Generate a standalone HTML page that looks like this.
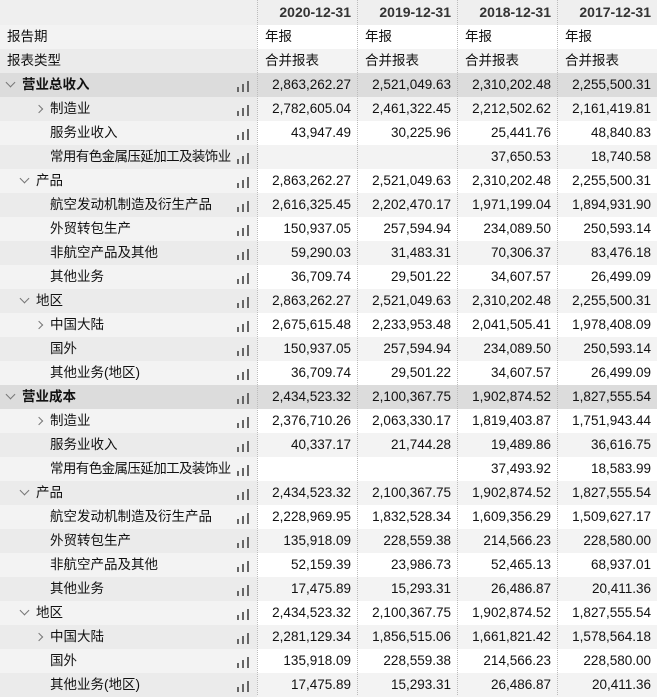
<!DOCTYPE html><html><head><meta charset="utf-8"><style>
*{margin:0;padding:0;box-sizing:border-box}
body{width:657px;height:695px;overflow:hidden;background:#fff;font-family:"Liberation Sans","Noto Sans CJK SC",sans-serif;font-size:13.5px;color:#111}
.r{position:absolute;left:0;width:657px;height:24px;line-height:24px}
.l{position:absolute;left:0;top:0;width:257px;height:24px;white-space:nowrap}
.c{position:absolute;top:0;width:100px;height:24px;text-align:right;padding-right:6px}
.t{position:absolute;top:0;width:100px;height:24px;text-align:left;padding-left:8px}
.ic{position:absolute;left:237px;top:0;width:14px;height:24px}
.ic i{position:absolute;bottom:5px;width:2.4px;background:#666}
.dn{position:absolute;top:6px;width:7px;height:7px;border-right:1px solid #777;border-bottom:1px solid #777;transform:rotate(45deg)}
.rt{position:absolute;top:9px;width:6px;height:6px;border-right:1px solid #777;border-bottom:1px solid #777;transform:rotate(-45deg)}
.v{position:absolute;left:257px;top:0;width:0;height:695px;border-left:1px dotted #bbb}
</style></head><body>
<div id="t"></div>
<script>
var H=[["2020-12-31","2019-12-31","2018-12-31","2017-12-31"]];
var rows=[
["报告期",0,"",null,["年报","年报","年报","年报"],1],
["报表类型",0,"",null,["合并报表","合并报表","合并报表","合并报表"],1],
["营业总收入",0,"v",1,["2,863,262.27","2,521,049.63","2,310,202.48","2,255,500.31"]],
["制造业",2,">",0,["2,782,605.04","2,461,322.45","2,212,502.62","2,161,419.81"]],
["服务业收入",2,"",0,["43,947.49","30,225.96","25,441.76","48,840.83"]],
["常用有色金属压延加工及装饰业",2,"",0,["","","37,650.53","18,740.58"]],
["产品",1,"v",0,["2,863,262.27","2,521,049.63","2,310,202.48","2,255,500.31"]],
["航空发动机制造及衍生产品",2,"",0,["2,616,325.45","2,202,470.17","1,971,199.04","1,894,931.90"]],
["外贸转包生产",2,"",0,["150,937.05","257,594.94","234,089.50","250,593.14"]],
["非航空产品及其他",2,"",0,["59,290.03","31,483.31","70,306.37","83,476.18"]],
["其他业务",2,"",0,["36,709.74","29,501.22","34,607.57","26,499.09"]],
["地区",1,"v",0,["2,863,262.27","2,521,049.63","2,310,202.48","2,255,500.31"]],
["中国大陆",2,">",0,["2,675,615.48","2,233,953.48","2,041,505.41","1,978,408.09"]],
["国外",2,"",0,["150,937.05","257,594.94","234,089.50","250,593.14"]],
["其他业务(地区)",2,"",0,["36,709.74","29,501.22","34,607.57","26,499.09"]],
["营业成本",0,"v",1,["2,434,523.32","2,100,367.75","1,902,874.52","1,827,555.54"]],
["制造业",2,">",0,["2,376,710.26","2,063,330.17","1,819,403.87","1,751,943.44"]],
["服务业收入",2,"",0,["40,337.17","21,744.28","19,489.86","36,616.75"]],
["常用有色金属压延加工及装饰业",2,"",0,["","","37,493.92","18,583.99"]],
["产品",1,"v",0,["2,434,523.32","2,100,367.75","1,902,874.52","1,827,555.54"]],
["航空发动机制造及衍生产品",2,"",0,["2,228,969.95","1,832,528.34","1,609,356.29","1,509,627.17"]],
["外贸转包生产",2,"",0,["135,918.09","228,559.38","214,566.23","228,580.00"]],
["非航空产品及其他",2,"",0,["52,159.39","23,986.73","52,465.13","68,937.01"]],
["其他业务",2,"",0,["17,475.89","15,293.31","26,486.87","20,411.36"]],
["地区",1,"v",0,["2,434,523.32","2,100,367.75","1,902,874.52","1,827,555.54"]],
["中国大陆",2,">",0,["2,281,129.34","1,856,515.06","1,661,821.42","1,578,564.18"]],
["国外",2,"",0,["135,918.09","228,559.38","214,566.23","228,580.00"]],
["其他业务(地区)",2,"",0,["17,475.89","15,293.31","26,486.87","20,411.36"]]
];
var h='<div class="r" style="top:0;height:25px;background:#efefef">';
H[0].forEach(function(d,j){h+='<div class="c" style="left:'+(257+j*100)+'px;font-weight:bold;color:#333;padding-right:6px;font-size:14px">'+d+'</div>'});
h+='</div>';
rows.forEach(function(r,i){
 var top=25+i*24,b=r[3]===1,odd=i%2==1;
 var lb=b?'#dcdcdc':(odd?'#ebebeb':'#f3f3f3'),cb=b?'#dcdcdc':(odd?'#f3f3f3':'#fff');
 h+='<div class="r" style="top:'+top+'px;background:'+cb+'"><div class="l" style="background:'+lb+'">';
 var tx=r[5]?7:[22,36,50][r[1]];
 if(r[2]=='v')h+='<span class="dn" style="left:'+(tx-15)+'px"></span>';
 if(r[2]=='>')h+='<span class="rt" style="left:'+(tx-14)+'px"></span>';
 var ls=r[0].length>12?'letter-spacing:-0.6px;':'';
 h+='<span style="position:absolute;left:'+tx+'px;'+ls+(b?'font-weight:bold;':'')+'">'+r[0]+'</span>';
 if(!r[5])h+='<div class="ic"><i style="left:0;height:5px"></i><i style="left:5px;height:8px"></i><i style="left:10px;height:11px"></i></div>';
 h+='</div>';
 r[4].forEach(function(v,j){h+='<div class="'+(r[5]?'t':'c')+'" style="left:'+(257+j*100)+'px">'+v+'</div>'});
 h+='</div>';
});
[257,357,457,557].forEach(function(x){h+='<div class="v" style="left:'+x+'px"></div>'});
document.getElementById('t').innerHTML=h;
</script>
</body></html>
